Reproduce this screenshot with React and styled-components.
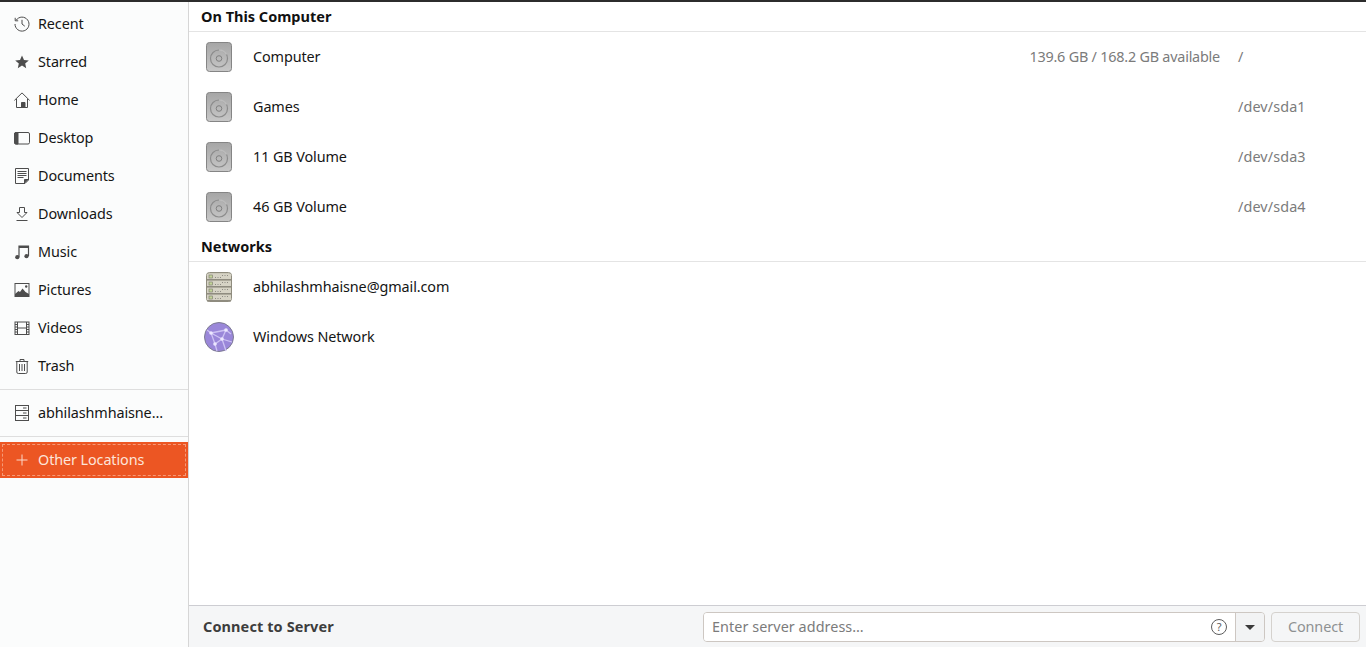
import React from "react";
import styled, { createGlobalStyle } from "styled-components";

const GlobalStyle = createGlobalStyle`
  html, body {
    margin: 0;
    height: 100%;
    overflow: hidden;
    background: #fff;
  }
  body {
    font-family: "Noto Sans", "Open Sans", sans-serif;
    font-size: 14.4px;
    letter-spacing: -0.1px;
    color: #111;
  }
`;

const Stroke = ({ children }) => (
  <svg width="16" height="16" viewBox="0 0 16 16" fill="none" stroke="#4d4d4d" strokeWidth="1">
    {children}
  </svg>
);

const icons = {
  recent: (
    <Stroke>
      <path d="M2.200 4.200A7 7 0 1 1 1 8" />
      <path d="M1.200 1.800v3h3" />
      <path d="M8 3.800V8l2.800 2.200" />
    </Stroke>
  ),
  star: (
    <Stroke>
      <path d="M8 1.500l2 4.400 4.800.5-3.600 3.200 1 4.700L8 11.400l-4.200 2.900 1-4.700L1.200 6.400l4.800-.5z" fill="#4d4d4d" stroke="none" />
    </Stroke>
  ),
  home: (
    <Stroke>
      <path d="M.4 8.400L8 .9l7.600 7.500" />
      <path d="M2.500 7v8.500h11V7" />
      <path d="M7.500 15.500v-5h3.500v5z" fill="#4d4d4d" />
    </Stroke>
  ),
  desktop: (
    <Stroke>
      <rect x="0.500" y="2.500" width="15" height="11.500" rx="1.500" />
      <path d="M0.500 4a1.500 1.500 0 0 1 1.500-1.500h2v11.500H2A1.500 1.500 0 0 1 .5 12.500z" fill="#4d4d4d" />
    </Stroke>
  ),
  documents: (
    <Stroke>
      <path d="M1.500 .5h13v11.500l-3.500 3.500H1.500z" />
      <path d="M3.500 3.500h9M3.500 5.500h9M3.500 7.500h9M3.500 9.500h6" />
      <path d="M14 11.500h-3.500V15z" fill="#4d4d4d" />
    </Stroke>
  ),
  downloads: (
    <Stroke>
      <path d="M5.500 1.500h5v5h2.500L8 11.500 3 6.500h2.500z" />
      <path d="M2.500 14.500h11" />
    </Stroke>
  ),
  music: (
    <Stroke>
      <path d="M5 13V2h9.500v10" strokeWidth="1.200" />
      <path d="M5 3h9.500" strokeWidth="2" />
      <circle cx="3.300" cy="13.200" r="2.100" fill="#4d4d4d" stroke="none" />
      <circle cx="12.500" cy="12.200" r="2.100" fill="#4d4d4d" stroke="none" />
    </Stroke>
  ),
  pictures: (
    <Stroke>
      <rect x="1" y="1.500" width="14" height="13" />
      <path d="M1 12l3.500-3 1.500 1 2.500-3.500 3 3.500 3.500 2v3H1z" fill="#4d4d4d" stroke="none" />
      <circle cx="12.200" cy="4.500" r="1.200" fill="#4d4d4d" stroke="none" />
    </Stroke>
  ),
  videos: (
    <Stroke>
      <rect x="1" y="2" width="14" height="12.500" />
      <path d="M3.500 2v12.500M12.500 2v12.500M3.500 8h9" />
      <path d="M1 4.500h2.500M1 7h2.500M1 9.500h2.500M1 12h2.500M12.500 4.500H15M12.500 7H15M12.500 9.500H15M12.500 12H15" />
    </Stroke>
  ),
  trash: (
    <Stroke>
      <path d="M1.800 3.500h12.400M6 3.500V1.500h4v2" />
      <path d="M2.800 3.500v10.500a1.500 1.500 0 0 0 1.500 1.500h7.400a1.500 1.500 0 0 0 1.500-1.500V3.500" />
      <path d="M5.500 6v7M8 6v7M10.500 6v7" />
    </Stroke>
  ),
  server: (
    <Stroke>
      <rect x="1.500" y="0.500" width="13" height="15" />
      <path d="M1.500 5.500h13M1.500 10.500h13" />
      <path d="M9 3h3.500M9 8h3.500M9 13h3.500" />
    </Stroke>
  ),
  plus: (
    <svg width="16" height="16" viewBox="0 0 16 16" fill="none" stroke="#fbd9cb" strokeWidth="1">
      <path d="M8 2.500v11M2.500 8h11" />
    </svg>
  ),
};

const DriveIcon = () => (
  <svg width="26" height="30" viewBox="0 0 26 30">
    <defs>
      <linearGradient id="drive" x1="0" y1="0" x2="0" y2="1">
        <stop offset="0" stopColor="#a6a6a6" />
        <stop offset="1" stopColor="#c8c8c8" />
      </linearGradient>
    </defs>
    <rect x="0.500" y="0.500" width="25" height="29" rx="3" fill="url(#drive)" stroke="#858585" />
    <circle cx="13" cy="16.500" r="8.500" fill="none" stroke="#8c8c8c" strokeWidth="1.200" />
    <circle cx="13" cy="16.500" r="2.800" fill="none" stroke="#808080" strokeWidth="1" />
    <path d="M13 8a8.500 8.500 0 0 1 7.500 4.500" fill="none" stroke="#bdbdbd" strokeWidth="1.600" />
  </svg>
);

const ServerIcon = () => (
  <svg width="26" height="30" viewBox="0 0 26 30">
    <rect x="0.500" y="0.500" width="25" height="29" rx="3" fill="#cbc8b9" stroke="#8f8c7e" />
    {[2, 9, 16, 23].map((y) => (
      <g key={y}>
        <rect x="1" y={y} width="24" height="5" fill="#d6d3c5" />
        <rect x="1" y={y + 5} width="24" height="1.500" fill="#8f8c80" />
        <rect x="3" y={y + 1} width="3.500" height="3" fill="#c4d49a" stroke="#77776a" strokeWidth="0.600" />
        <path d={`M9 ${y + 3.500}h7M16 ${y + 1.500}h6`} stroke="#8f8c84" strokeWidth="1" strokeDasharray="1 1.500" />
      </g>
    ))}
  </svg>
);

const GlobeIcon = () => (
  <svg width="30" height="30" viewBox="0 0 30 30">
    <circle cx="15" cy="15" r="14.500" fill="#9a87d9" stroke="#7d7b92" />
    <path
      d="M3 8l4 3 11 6 10 3M7 11l4 11 7-5M7 11l15-3-4 9M11 22l2 7M18 17l4 12M22 8l5 4"
      fill="none"
      stroke="#cdc2f3"
      strokeWidth="1.300"
    />
    {[[7, 11], [22, 8], [18, 17], [11, 22]].map(([cx, cy]) => (
      <circle key={cx + "-" + cy} cx={cx} cy={cy} r="1.800" fill="#ece7ff" />
    ))}
  </svg>
);

const places = [
  ["recent", "Recent"],
  ["star", "Starred"],
  ["home", "Home"],
  ["desktop", "Desktop"],
  ["documents", "Documents"],
  ["downloads", "Downloads"],
  ["music", "Music"],
  ["pictures", "Pictures"],
  ["videos", "Videos"],
  ["trash", "Trash"],
];

const computerRows = [
  { name: "Computer", info: "139.6 GB / 168.2 GB available", path: "/" },
  { name: "Games", path: "/dev/sda1" },
  { name: "11 GB Volume", path: "/dev/sda3" },
  { name: "46 GB Volume", path: "/dev/sda4" },
];

function App() {
  return (
    <>
      <GlobalStyle />
      <Window>
        <Sidebar>
          <Places>
            {places.map(([icon, label]) => (
              <Place key={label}>
                <PlaceIcon>{icons[icon]}</PlaceIcon>
                <PlaceLabel>{label}</PlaceLabel>
              </Place>
            ))}
          </Places>
          <Divider />
          <Place>
            <PlaceIcon>{icons.server}</PlaceIcon>
            <Ellipsis>abhilashmhaisne@gmail.com</Ellipsis>
          </Place>
          <Divider $last />
          <ActivePlace>
            <PlaceIcon>{icons.plus}</PlaceIcon>
            <PlaceLabel>Other Locations</PlaceLabel>
          </ActivePlace>
        </Sidebar>
        <Main>
          <List>
            <SectionTitle>On This Computer</SectionTitle>
            {computerRows.map((row) => (
              <Row key={row.name}>
                <RowIcon>
                  <DriveIcon />
                </RowIcon>
                <RowName>{row.name}</RowName>
                {row.info && <RowInfo>{row.info}</RowInfo>}
                <RowPath>{row.path}</RowPath>
              </Row>
            ))}
            <SectionTitle>Networks</SectionTitle>
            <Row>
              <RowIcon>
                <ServerIcon />
              </RowIcon>
              <RowName>abhilashmhaisne@gmail.com</RowName>
            </Row>
            <Row>
              <RowIcon>
                <GlobeIcon />
              </RowIcon>
              <RowName>Windows Network</RowName>
            </Row>
          </List>
          <BottomBar>
            <ConnectLabel>Connect to Server</ConnectLabel>
            <AddressGroup>
              <AddressField>
                <Placeholder>Enter server address…</Placeholder>
                <svg width="16" height="16" viewBox="0 0 16 16">
                  <circle cx="8" cy="8" r="7.500" fill="none" stroke="#5c5c5c" />
                  <text x="8" y="12" textAnchor="middle" fontSize="11" fill="#5c5c5c" fontFamily="Noto Sans">?</text>
                </svg>
              </AddressField>
              <DropButton>
                <Arrow />
              </DropButton>
            </AddressGroup>
            <ConnectButton>Connect</ConnectButton>
          </BottomBar>
        </Main>
      </Window>
    </>
  );
}

const Window = styled.div`
  display: flex;
  height: 647px;
  border-top: 2px solid #2c2c2c;
  box-sizing: border-box;
`;

const Sidebar = styled.nav`
  width: 189px;
  flex: none;
  box-sizing: border-box;
  padding-top: 3px;
  background: #fbfcfc;
  border-right: 1px solid #d6d6d6;
`;

const Places = styled.div`
  display: flex;
  flex-direction: column;
`;

const Place = styled.div`
  display: flex;
  align-items: center;
  height: 38px;
  padding-left: 14px;
  gap: 8px;
  color: #151515;
`;

const ActivePlace = styled(Place)`
  height: 36px;
  color: #fde4d9;
  background: #ec5623;
  outline: 1px dashed #f59a78;
  outline-offset: -3px;
`;

const PlaceIcon = styled.span`
  display: flex;
  width: 16px;
  height: 16px;
  flex: none;
`;

const PlaceLabel = styled.span`
  padding-bottom: 2px;
`;

const Ellipsis = styled(PlaceLabel)`
  overflow: hidden;
  white-space: nowrap;
  text-overflow: ellipsis;
  width: 130px;
`;

const Divider = styled.div`
  height: 1px;
  background: #dedede;
  margin-top: 4px;
  margin-bottom: ${(p) => (p.$last ? "5px" : "4px")};
`;

const Main = styled.main`
  flex: 1;
  display: flex;
  flex-direction: column;
  min-width: 0;
`;

const List = styled.div`
  flex: 1;
  display: flex;
  flex-direction: column;
`;

const SectionTitle = styled.h2`
  margin: 0;
  height: 29px;
  padding: 0 12px;
  font-size: 14.5px;
  font-weight: 700;
  letter-spacing: 0;
  line-height: 28px;
  color: #111;
  border-bottom: 1px solid #e4e4e4;
`;

const Row = styled.div`
  display: flex;
  align-items: center;
  height: 50px;
`;

const RowIcon = styled.span`
  display: flex;
  justify-content: center;
  width: 30px;
  margin-left: 15px;
  flex: none;
`;

const RowName = styled.span`
  margin-left: 19px;
  padding-bottom: 2px;
  color: #151515;
`;

const RowInfo = styled.span`
  margin-left: auto;
  padding-bottom: 2px;
  letter-spacing: -0.22px;
  color: #7b7b7b;
`;

const RowPath = styled.span`
  flex: none;
  width: 128px;
  margin-left: 18px;
  padding-bottom: 2px;
  letter-spacing: 0.1px;
  color: #7b7b7b;
  ${RowName} + & {
    margin-left: auto;
  }
`;

const BottomBar = styled.div`
  display: flex;
  align-items: center;
  height: 42px;
  box-sizing: border-box;
  padding: 1px 6px 0 14px;
  background: #f5f6f7;
  border-top: 1px solid #cdcdd2;
`;

const ConnectLabel = styled.span`
  padding-bottom: 2px;
  font-size: 14.5px;
  font-weight: 700;
  letter-spacing: 0.1px;
  color: #3d3d3d;
`;

const AddressGroup = styled.div`
  display: flex;
  width: 562px;
  height: 30px;
  margin-left: auto;
  box-sizing: border-box;
  border: 1px solid #cdc7c2;
  border-radius: 4px;
  overflow: hidden;
`;

const AddressField = styled.div`
  flex: 1;
  display: flex;
  align-items: center;
  justify-content: space-between;
  padding: 0 8px;
  background: #fff;
`;

const Placeholder = styled.span`
  padding-bottom: 2px;
  letter-spacing: 0.05px;
  color: #7b7b7b;
`;

const DropButton = styled.div`
  width: 28px;
  display: flex;
  align-items: center;
  justify-content: center;
  background: #f2f3f4;
  border-left: 1px solid #cdc7c2;
`;

const Arrow = styled.span`
  width: 0;
  height: 0;
  border-left: 5px solid transparent;
  border-right: 5px solid transparent;
  border-top: 5px solid #3a3a3a;
`;

const ConnectButton = styled.div`
  width: 89px;
  height: 30px;
  box-sizing: border-box;
  margin-left: 6px;
  padding-bottom: 2px;
  display: flex;
  align-items: center;
  justify-content: center;
  color: #8e9192;
  background: #f5f6f7;
  border: 1px solid #d5d2ce;
  border-radius: 4px;
`;

export default App;
